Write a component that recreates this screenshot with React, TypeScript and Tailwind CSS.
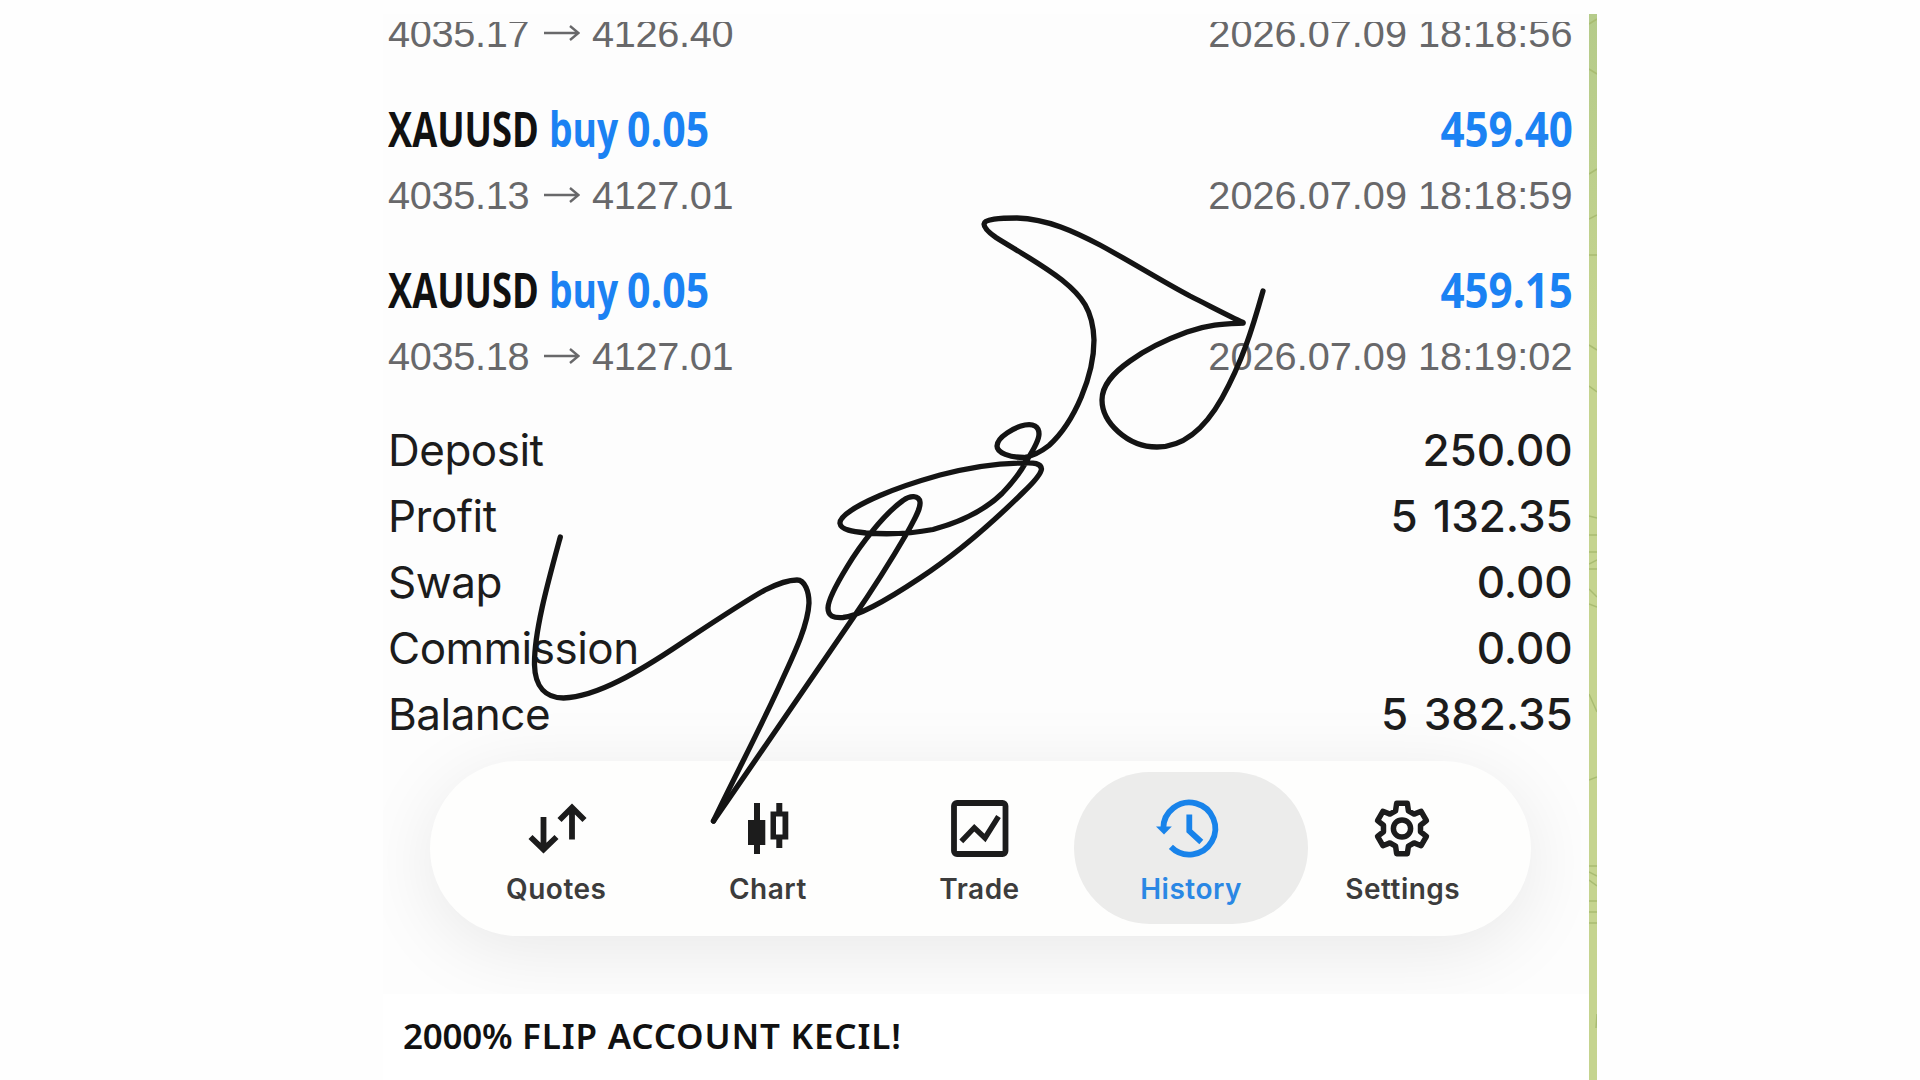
import React from 'react';

interface Deal {
  symbol: string;
  side: string;
  lot: string;
  profit: string;
  open: string;
  close: string;
  time: string;
}

const deals: Deal[] = [
  { symbol: 'XAUUSD', side: 'buy', lot: '0.05', profit: '459.40', open: '4035.13', close: '4127.01', time: '2026.07.09 18:18:59' },
  { symbol: 'XAUUSD', side: 'buy', lot: '0.05', profit: '459.15', open: '4035.18', close: '4127.01', time: '2026.07.09 18:19:02' },
];

const summary = [
  { label: 'Deposit', value: '250.00' },
  { label: 'Profit', value: '5 132.35' },
  { label: 'Swap', value: '0.00' },
  { label: 'Commission', value: '0.00' },
  { label: 'Balance', value: '5 382.35' },
];

// pen strokes of the signature, split where the pen turns sharply
const strokes = [
  'M560.3 537C548 582 534 632 534.5 665C535 687 546 698 563.5 698C597 697 640 671 681 643.5C712 623 745 601 765 590C779 583 789 580 797 580C805 580 809 592 809 603C808 624 796 650 783 678C763 723 735 776 713.5 821',
  'M713.5 821C760 754 806 687 853 618C873 589 893 557 907 533C914 520 921 509 920 502C919 495 910 495 903 500.5C884 514 860 545 847 567C836 585 828 601 828 608C828 616 833 618 843 617.5C860 616 890 598 920 578C955 555 990 525 1023 492.5C1033 483 1041 474 1041.5 469C1041 463 1034 462.5 1023 463C995 463 963 469 940 475C915 482 895 489 880 495.5C858 505 839 516 840 523.5C841 530 853 531.5 866 533C895 535 915 533 933 529.5C957 523 982 513 1002 493.5C1014 481 1022 470 1027 460C1034 449 1039 440 1039 434C1039 426 1033 423.5 1025 425C1015 427 997 437 997 446C997 453 1010 457.5 1024 457.5C1033 456 1042 451 1049 445.5C1075 422 1094 375 1094 340C1093 310 1082 296 1062 280C1040 263 1014 249 996 237.5C988 232 984 228 984 224C984 219 1000 218 1017 218C1048 219 1075 232 1100 245C1135 264 1158 279 1190 296C1210 306 1229 316 1243 322.5',
  'M1243 323.2C1225 324 1210 324 1187 332C1165 340 1145 350 1130 361C1113 373 1102 385 1102 400C1102 422 1127 447 1157 447C1183 447 1204 430 1222 398C1242 362 1252 330 1263 291',
];

// six teeth, each given as [radius, angle offset]
const gear = [0, 60, 120, 180, 240, 300]
  .flatMap((a) =>
    [
      [18.8, -20],
      [25.7, -12],
      [25.7, 12],
      [18.8, 20],
    ].map(([r, o]) => {
      const t = ((a + o - 90) * Math.PI) / 180;
      return `${32 + r * Math.cos(t)},${31.5 + r * Math.sin(t)}`;
    })
  )
  .join(' ');

function QuotesIcon() {
  return (
    <svg className="h-16 w-16" viewBox="0 0 64 64" fill="none" stroke="#1c1c1c" strokeWidth="5.8">
      <path d="M20.5 20v32M7.5 40l13 12.5L33.5 40M49 42.5V11M36.5 23l12.5-12.5L61.5 23" />
    </svg>
  );
}

function ChartIcon() {
  return (
    <svg className="h-16 w-16" viewBox="0 0 64 64" fill="#1c1c1c">
      <path d="M19 6h6v17h5.3v25H25v9h-6v-9h-6V23h6z" />
      <path fillRule="evenodd" d="M41.3 6h6v8.5h6v28h-6V51h-6v-8.5h-5.8v-28h5.8zM41 19.5v18h6.5v-18z" />
    </svg>
  );
}

function TradeIcon() {
  return (
    <svg className="h-16 w-16" viewBox="0 0 64 64" fill="none" stroke="#1c1c1c">
      <rect x="7" y="6" width="51.5" height="51" rx="3" strokeWidth="5.8" />
      <path strokeWidth="5.4" d="M14.3 44.3l13-13.6L38 41l13.5-21.5" />
    </svg>
  );
}

function HistoryIcon() {
  return (
    <svg className="h-16 w-16 overflow-visible" viewBox="0 0 64 64" fill="none" stroke="#1883ea" strokeWidth="5.8">
      <path d="M5.3 31.5a26 26 0 1 1 7.6 18.4" />
      <path d="M31.3 17.5V34l12 11" />
      <path d="M-2 29.5h15.8L6 37.5z" fill="#1883ea" stroke="none" />
    </svg>
  );
}

function SettingsIcon() {
  return (
    <svg className="h-16 w-16" viewBox="0 0 64 64" fill="none" stroke="#1c1c1c" strokeWidth="5.5" strokeLinejoin="round">
      <polygon points={gear} />
      <circle cx="32" cy="31.5" r="8.6" />
    </svg>
  );
}

const tabs = [
  { label: 'Quotes', icon: <QuotesIcon /> },
  { label: 'Chart', icon: <ChartIcon /> },
  { label: 'Trade', icon: <TradeIcon /> },
  { label: 'History', icon: <HistoryIcon />, active: true },
  { label: 'Settings', icon: <SettingsIcon /> },
];

function PriceLine({ open, close, time }: { open: string; close: string; time: string }) {
  return (
    <div className="flex h-16 items-center justify-between font-['Liberation_Sans',sans-serif] text-[39.7px] leading-[62px] text-[#68686a]">
      <div className="flex items-center pl-px tracking-[-0.3px]">
        <span className="w-[156px]">{open}</span>
        <svg className="mr-[12px] h-5 w-9" viewBox="0 0 36 20" fill="none" stroke="#68686a" strokeWidth="2.4">
          <path d="M0 10h35M26 3l8.5 7L26 17" />
        </svg>
        <span>{close}</span>
      </div>
      <span>{time}</span>
    </div>
  );
}

export default function App() {
  return (
    <div className="relative h-[1080px] w-[1920px] overflow-hidden bg-[#fefefe]">
      <div className="flex pt-[14px] pl-[383px]">
        <div className="h-[1066px] w-[1206px] bg-[#fdfdfd]">
          <div className="mt-2 h-[972px] w-[1198px] overflow-hidden pl-1">
            <div className="-mt-[21px] w-[1185.5px]">
              <PriceLine open="4035.17" close="4126.40" time="2026.07.09 18:18:56" />
              {deals.map((deal) => (
                <div key={deal.time} className="pt-[28.5px]">
                  <div className="flex h-[69px] justify-between pt-px font-['Open_Sans',sans-serif] text-[48px] leading-[67px] font-bold">
                    <div className="flex pl-px whitespace-nowrap">
                      <span className="w-[161px] origin-left scale-x-[0.755] text-[#111111]">{deal.symbol}</span>
                      <span className="w-[78px] origin-left scale-x-[0.775] text-[#1b82f3]">{deal.side}</span>
                      <span className="origin-left scale-x-[0.855] text-[#1b82f3]">{deal.lot}</span>
                    </div>
                    <span className="origin-right scale-x-[0.878] text-[#1b82f3]">{deal.profit}</span>
                  </div>
                  <PriceLine open={deal.open} close={deal.close} time={deal.time} />
                </div>
              ))}
              <div className="pt-[29px] font-['Inter',sans-serif] text-[44px] leading-[66px] tracking-[-0.5px] text-[#1c1c1c]">
                {summary.map((row) => (
                  <div key={row.label} className="flex h-[66px] justify-between">
                    <span className="pl-px">{row.label}</span>
                    <span className="font-medium tracking-[-0.1px] [word-spacing:4px]">{row.value}</span>
                  </div>
                ))}
              </div>
            </div>
            <div className="mt-[14px] ml-[43px] flex h-[175px] w-[1101px] justify-center rounded-full bg-[#fefefd] pt-[11px] pr-[2px] shadow-[0_14px_76px_rgba(0,0,0,0.085)]">
              {tabs.map((tab) => (
                <div
                  key={tab.label}
                  className={`-mx-[11.2px] flex h-[152px] w-[234px] shrink-0 flex-col items-center rounded-full pt-[25px] ${
                    tab.active ? 'bg-[#ececeb] text-[#2a87e4]' : 'text-[#3c3c3c]'
                  }`}
                >
                  <div className="-ml-[2px]">{tab.icon}</div>
                  <span className="mt-[11px] font-['Inter',sans-serif] text-[28px] leading-[34px] font-semibold tracking-[0.5px]">{tab.label}</span>
                </div>
              ))}
            </div>
          </div>
          <div className="h-[86px] bg-white pt-[18px] pl-[20px] font-['Noto_Sans',sans-serif] text-[35px] leading-[48px] font-semibold tracking-[0.8px] whitespace-nowrap text-[#111111]">
            <span className="tracking-[-0.3px]">2000%</span> FLIP ACCOUNT KECIL!
          </div>
        </div>
        <svg className="h-[1066px] w-2 bg-linear-to-b from-[#b5cb8a] via-[#c5d48f] via-30% to-[#c5d48f]" viewBox="0 0 8 1066" fill="none" stroke="#a9bc72" strokeWidth="1.5">
          <path d="M0 10l8-5M0 55l8 5M0 160l8-5M0 205l8-4M0 241h8M0 331l8 5M0 372l8 6M0 502l8 2M0 521h8M0 538h8M0 550l8-4M0 555h8M0 575l8 8M0 590l8 3M0 680l8 18M0 766l8-3M0 852h8M0 858l8 4M0 866l8 6M0 887h8M0 898h8M0 909h8M8 1000l-1 14" />
        </svg>
      </div>
      <svg className="pointer-events-none absolute inset-0 h-full w-full" viewBox="0 0 1920 1080" fill="none" stroke="#141414" strokeWidth="5.3" strokeLinecap="round" strokeLinejoin="round">
        {strokes.map((d) => (
          <path key={d} d={d} />
        ))}
      </svg>
    </div>
  );
}
